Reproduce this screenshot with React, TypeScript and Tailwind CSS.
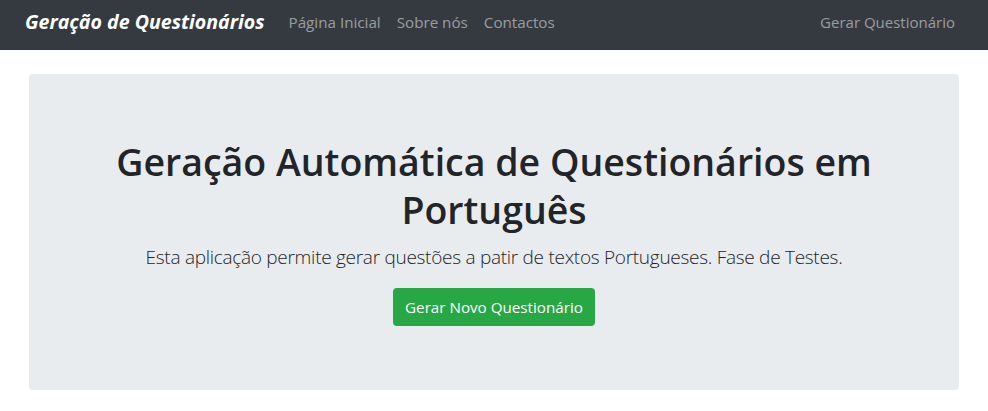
export default function App() {
  return (
    <div className="min-h-screen bg-white text-[#212529] font-['Open_Sans',sans-serif]">
      {/* Navbar */}
      <nav className="h-[50px] bg-[#343a40] flex items-center px-[25px] pb-[6px]">
        <a className="text-[19.6px] font-bold italic text-white mr-[24px] whitespace-nowrap">
          Geração de Questionários
        </a>
        <div className="flex gap-4 text-[15.2px] text-white/50">
          <a>Página Inicial</a>
          <a>Sobre nós</a>
          <a>Contactos</a>
        </div>
        <a className="ml-auto mr-[8px] text-[15px] text-white/50">Gerar Questionário</a>
      </nav>

      {/* Jumbotron */}
      <div className="mx-[29px] mt-[24px] rounded bg-[#e9ecef] px-8 py-16 text-center">
        <h1 className="text-[37.5px] leading-[48px] font-semibold mb-2">
          Geração Automática de Questionários em Português
        </h1>
        <p className="text-[19px] leading-[30px] font-light tracking-[-0.28px] mb-4">
          Esta aplicação permite gerar questões a patir de textos Portugueses. Fase de Testes.
        </p>
        <button className="bg-[#28a745] text-white text-[15.2px] leading-6 px-3 py-[7px] rounded">
          Gerar Novo Questionário
        </button>
      </div>
    </div>
  );
}
